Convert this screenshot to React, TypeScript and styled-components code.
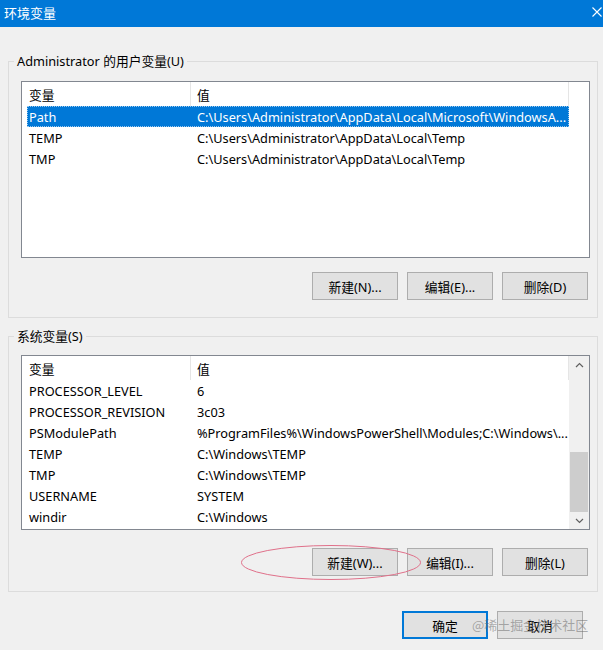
import React from "react";
import styled, { createGlobalStyle } from "styled-components";

interface EnvVar {
  name: string;
  value: string;
}

const userVars: EnvVar[] = [
  { name: "Path", value: "C:\\Users\\Administrator\\AppData\\Local\\Microsoft\\WindowsA..." },
  { name: "TEMP", value: "C:\\Users\\Administrator\\AppData\\Local\\Temp" },
  { name: "TMP", value: "C:\\Users\\Administrator\\AppData\\Local\\Temp" },
];

const systemVars: EnvVar[] = [
  { name: "PROCESSOR_LEVEL", value: "6" },
  { name: "PROCESSOR_REVISION", value: "3c03" },
  { name: "PSModulePath", value: "%ProgramFiles%\\WindowsPowerShell\\Modules;C:\\Windows\\..." },
  { name: "TEMP", value: "C:\\Windows\\TEMP" },
  { name: "TMP", value: "C:\\Windows\\TEMP" },
  { name: "USERNAME", value: "SYSTEM" },
  { name: "windir", value: "C:\\Windows" },
];

const GlobalStyle = createGlobalStyle`
  html, body {
    margin: 0;
    padding: 0;
    background: #f0f0f0;
  }
  body {
    font-family: "Noto Sans", "Noto Sans CJK SC", sans-serif;
    font-size: 12.75px;
    color: #000;
  }
`;

const VarList = ({
  vars,
  height,
  selected,
  scroll,
}: {
  vars: EnvVar[];
  height: number;
  selected?: number;
  scroll?: boolean;
}) => {
  return (
    <ListBox $h={height}>
      <ListMain>
        <HeaderRow>
          <HeaderCell>变量</HeaderCell>
          <HeaderCell $divider>值</HeaderCell>
        </HeaderRow>
        {vars.map((v, i) => (
          <Row key={v.name + i} $selected={selected === i}>
            <NameCell>{v.name}</NameCell>
            <ValueCell>{v.value}</ValueCell>
          </Row>
        ))}
      </ListMain>
      {scroll ? (
        <ScrollBar>
          <ScrollArrow>
            <svg width="9" height="6" viewBox="0 0 9 6">
              <path d="M1 5 L4.5 1.5 L8 5" fill="none" stroke="#606060" strokeWidth="1.2" />
            </svg>
          </ScrollArrow>
          <ScrollTrack />
          <ScrollThumb />
          <ScrollArrow>
            <svg width="9" height="6" viewBox="0 0 9 6">
              <path d="M1 1 L4.5 4.5 L8 1" fill="none" stroke="#606060" strokeWidth="1.2" />
            </svg>
          </ScrollArrow>
        </ScrollBar>
      ) : (
        <EmptyGutter />
      )}
    </ListBox>
  );
};

export default function App() {
  return (
    <>
      <GlobalStyle />
      <Window>
        <TitleBar>
          <Title>环境变量</Title>
          <CloseIcon width="10" height="10" viewBox="0 0 10 10">
            <path d="M0.5 0.5 L9.5 9.5 M9.5 0.5 L0.5 9.5" stroke="#fff" strokeWidth="1.1" />
          </CloseIcon>
        </TitleBar>
        <Content>
          <Group $pt={12} $pb={17}>
            <Legend>Administrator 的用户变量(U)</Legend>
            <VarList vars={userVars} height={177} selected={0} />
            <ButtonRow $mt={14}>
              <Button>新建(N)...</Button>
              <Button>编辑(E)...</Button>
              <Button>删除(D)</Button>
            </ButtonRow>
          </Group>
          <Group $pt={11} $pb={15} $mt={10}>
            <Legend>系统变量(S)</Legend>
            <VarList vars={systemVars} height={175} scroll />
            <ButtonRow $mt={18}>
              <Button>新建(W)...</Button>
              <Button>编辑(I)...</Button>
              <Button>删除(L)</Button>
            </ButtonRow>
          </Group>
          <Footer>
            <Button $primary>确定</Button>
            <Button>取消</Button>
          </Footer>
        </Content>
        <Highlight width="182" height="37" viewBox="0 0 182 37">
          <ellipse cx="91" cy="18.5" rx="89.5" ry="17" fill="none" stroke="#e0708a" strokeWidth="1" />
        </Highlight>
        <Watermark>@稀土掘金技术社区</Watermark>
      </Window>
    </>
  );
}

const Window = styled.div`
  position: relative;
  width: 603px;
  height: 650px;
  background: #f0f0f0;
  overflow: hidden;
`;

const TitleBar = styled.div`
  height: 27px;
  background: #0078d7;
  display: flex;
  align-items: center;
  justify-content: space-between;
  padding: 0 1px 3px 4px;
  box-sizing: border-box;
`;

const Title = styled.div`
  color: #fff;
  font-family: "Noto Sans CJK SC", sans-serif;
  font-size: 13px;
`;

const CloseIcon = styled.svg`
  display: block;
`;

const Content = styled.div`
  padding: 26px 5px 0 8px;
`;

const Group = styled.fieldset<{ $pt: number; $pb: number; $mt?: number }>`
  margin: ${(p) => p.$mt || 0}px 0 0 0;
  border: 1px solid #dcdcdc;
  padding: ${(p) => p.$pt}px 7px ${(p) => p.$pb}px 12px;
  min-width: 0;
`;

const Legend = styled.legend`
  padding: 0 3px;
  margin-left: -7px;
  line-height: 16px;
  font-size: 12.75px;
`;

const ListBox = styled.div<{ $h: number }>`
  height: ${(p) => p.$h}px;
  border: 1px solid #828790;
  background: #fff;
  box-sizing: border-box;
  display: flex;
  overflow: hidden;
`;

const ListMain = styled.div`
  width: 547px;
  display: flex;
  flex-direction: column;
`;

const HeaderRow = styled.div`
  height: 24px;
  display: grid;
  grid-template-columns: 168px 1fr;
  flex-shrink: 0;
`;

const HeaderCell = styled.div<{ $divider?: boolean }>`
  display: flex;
  align-items: center;
  padding-left: ${(p) => (p.$divider ? 6 : 7)}px;
  border-left: ${(p) => (p.$divider ? "1px solid #e5e5e5" : "none")};
  border-right: ${(p) => (p.$divider ? "1px solid #e5e5e5" : "none")};
  font-family: "Noto Sans CJK SC", sans-serif;
`;

const Row = styled.div<{ $selected?: boolean }>`
  height: 21px;
  margin-left: 5px;
  display: grid;
  grid-template-columns: 163px 1fr;
  align-items: center;
  flex-shrink: 0;
  background: ${(p) => (p.$selected ? "#0078d7" : "transparent")};
  color: ${(p) => (p.$selected ? "#fff" : "#000")};
  outline: ${(p) => (p.$selected ? "1px dotted rgba(255,255,255,0.6)" : "none")};
  outline-offset: -1px;
`;

const NameCell = styled.div`
  padding-left: 2px;
  white-space: nowrap;
`;

const ValueCell = styled.div`
  padding-left: 7px;
  white-space: nowrap;
  overflow: hidden;
`;

const EmptyGutter = styled.div`
  flex: 1;
`;

const ScrollBar = styled.div`
  flex: 1;
  display: flex;
  flex-direction: column;
  background: #f0f0f0;
  padding: 0 1px;
`;

const ScrollArrow = styled.div`
  height: 17px;
  display: flex;
  align-items: center;
  justify-content: center;
  flex-shrink: 0;
`;

const ScrollTrack = styled.div`
  flex: 1;
`;

const ScrollThumb = styled.div`
  height: 60px;
  background: #cdcdcd;
  flex-shrink: 0;
`;

const ButtonRow = styled.div<{ $mt: number }>`
  margin-top: ${(p) => p.$mt}px;
  display: flex;
  justify-content: flex-end;
  gap: 9px;
  padding-right: 2px;
`;

const Button = styled.button<{ $primary?: boolean }>`
  width: 86px;
  height: 28px;
  box-sizing: border-box;
  background: #e1e1e1;
  border: ${(p) => (p.$primary ? "2px solid #0078d7" : "1px solid #adadad")};
  border-radius: 0;
  font-family: "Noto Sans", "Noto Sans CJK SC", sans-serif;
  font-size: 12.75px;
  color: #000;
  padding: 0;
  cursor: default;
`;

const Footer = styled.div`
  margin-top: 19px;
  display: flex;
  justify-content: flex-end;
  gap: 9px;
  padding-right: 15px;
`;

const Highlight = styled.svg`
  position: absolute;
  left: 240px;
  top: 544px;
  pointer-events: none;
`;

const Watermark = styled.div`
  position: absolute;
  left: 472px;
  top: 615px;
  font-family: "Noto Sans CJK SC", sans-serif;
  font-size: 13px;
  color: rgba(110, 110, 110, 0.55);
  pointer-events: none;
`;
